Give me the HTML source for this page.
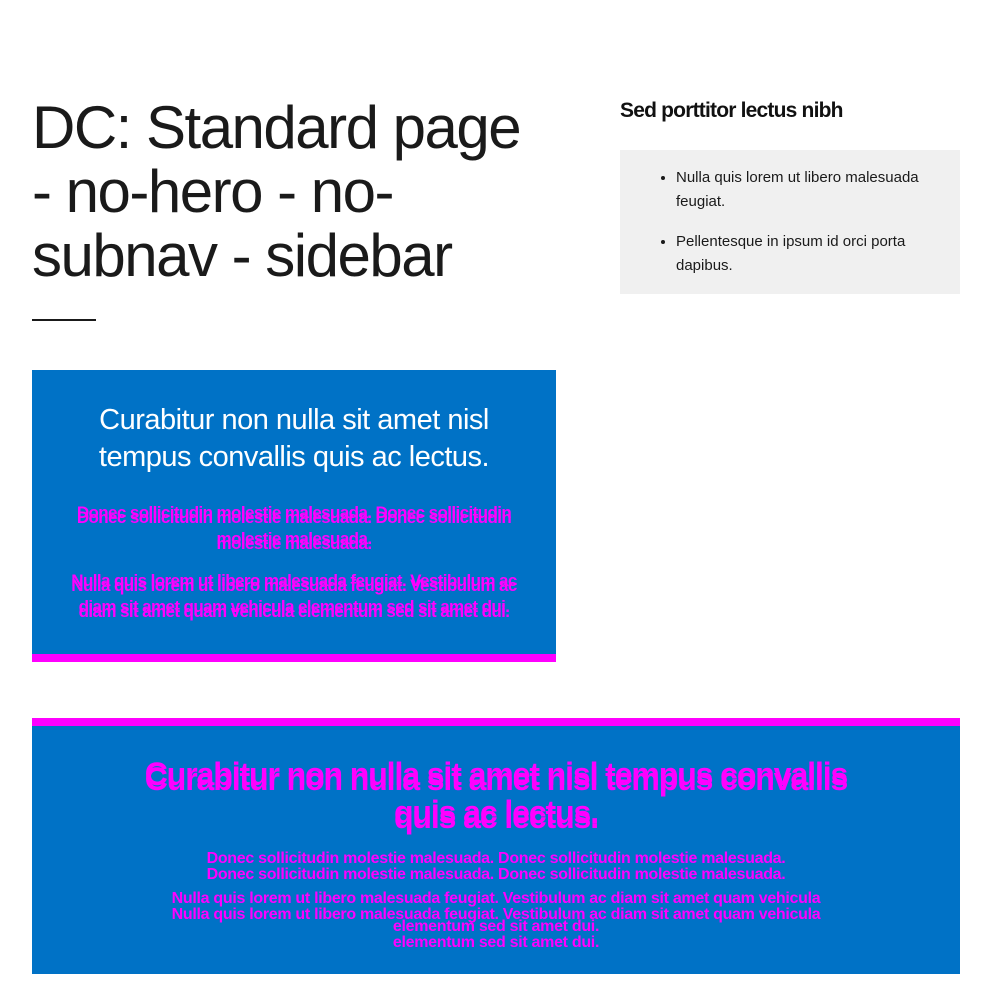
<!DOCTYPE html>
<html><head><meta charset="utf-8"><style>
*{margin:0;padding:0;box-sizing:border-box}
body{width:992px;height:990px;background:#fff;font-family:"Liberation Sans",sans-serif;position:relative;overflow:hidden;color:#1a1a1a}
h1{position:absolute;left:32px;top:96px;font-size:60px;font-weight:normal;line-height:64px;letter-spacing:-1.5px;white-space:nowrap}
.rule{position:absolute;left:32px;top:319px;width:64px;height:2px;background:#1a1a1a}
.side h2{position:absolute;left:620px;top:99px;font-size:21px;font-weight:bold;letter-spacing:-0.8px;white-space:nowrap;color:#111}
.grey{position:absolute;left:620px;top:150px;width:340px;height:144px;background:#f0f0f0;padding:16px 20px 0 56px;font-size:15px;line-height:24px}
.grey li{margin-bottom:16px}
.b1{position:absolute;left:32px;top:370px;width:524px;height:292px;background:#0072c6;border-bottom:8px solid #f0f;text-align:center;padding:32px 10px 0}
.b1 h3{color:#fff;font-weight:normal;font-size:29px;line-height:37px;letter-spacing:-0.5px}
.m{color:#f0f;font-weight:bold}
.b1 p{font-size:17px;line-height:26px;margin-top:24px;text-shadow:0 5px 0 #f0f;letter-spacing:-0.6px;white-space:nowrap}
.b1 p+p{margin-top:16px}
.b2{position:absolute;left:32px;top:718px;width:928px;height:256px;background:#0072c6;border-top:8px solid #f0f;text-align:center;padding:29px 20px 0}
.b2 h3{color:#f0f;font-weight:bold;font-size:32px;line-height:38px;letter-spacing:-1.1px;text-shadow:0 5px 0 #f0f;white-space:nowrap}
.b2 p{font-size:16px;line-height:32px;text-shadow:0 16px 0 #f0f;letter-spacing:-0.3px;white-space:nowrap}
.b2 p.a{margin-top:12px}
.b2 p.b{margin-top:10px;line-height:28px}
</style></head><body>
<h1>DC: Standard page<br>- no-hero - no-<br>subnav - sidebar</h1>
<div class="rule"></div>
<div class="side"><h2>Sed porttitor lectus nibh</h2></div>
<div class="grey"><ul><li>Nulla quis lorem ut libero malesuada feugiat.</li><li>Pellentesque in ipsum id orci porta dapibus.</li></ul></div>
<div class="b1">
<h3>Curabitur non nulla sit amet nisl<br>tempus convallis quis ac lectus.</h3>
<p class="m">Donec sollicitudin molestie malesuada. Donec sollicitudin<br>molestie malesuada.</p>
<p class="m">Nulla quis lorem ut libero malesuada feugiat. Vestibulum ac<br>diam sit amet quam vehicula elementum sed sit amet dui.</p>
</div>
<div class="b2">
<h3>Curabitur non nulla sit amet nisl tempus convallis<br>quis ac lectus.</h3>
<p class="m a">Donec sollicitudin molestie malesuada. Donec sollicitudin molestie malesuada.</p>
<p class="m b">Nulla quis lorem ut libero malesuada feugiat. Vestibulum ac diam sit amet quam vehicula<br>elementum sed sit amet dui.</p>
</div>
</body></html>
